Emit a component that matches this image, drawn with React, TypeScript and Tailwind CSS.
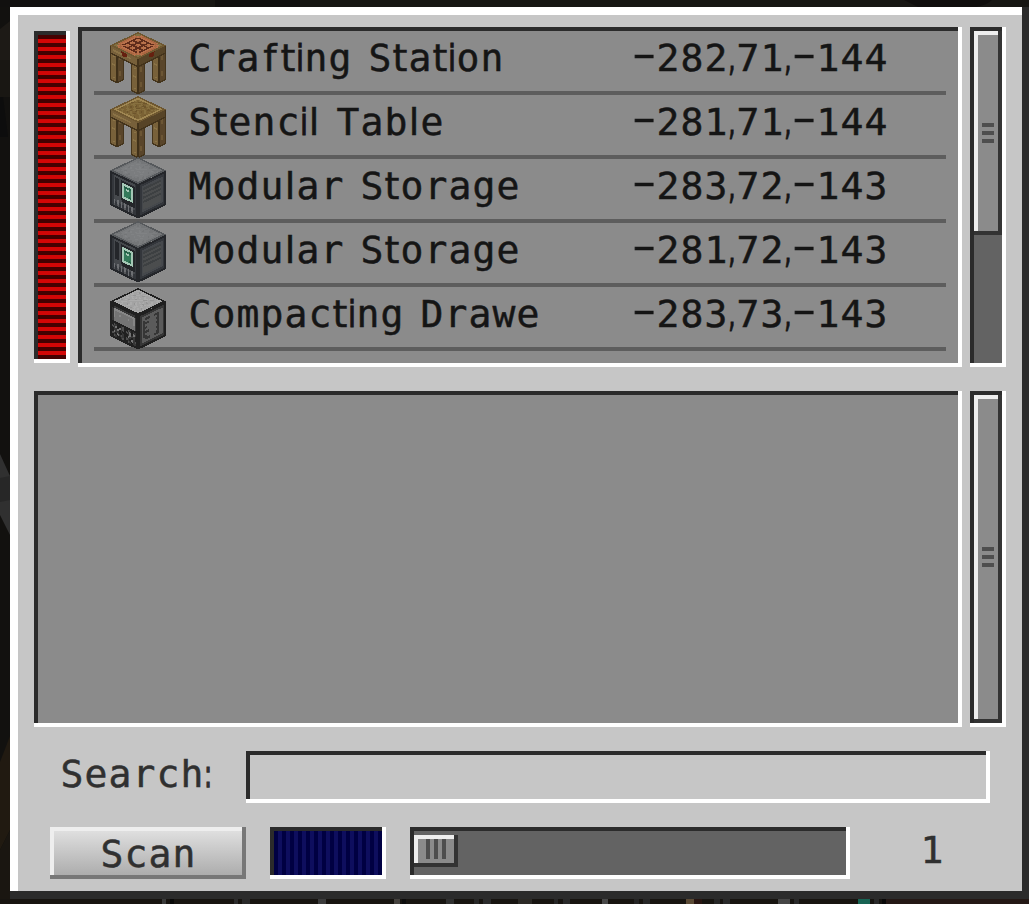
import React from "react";

/* ---------- text ---------- */

type Glyph = { box: string; face?: string };

const MONO = "font-['DejaVu_Sans_Mono',monospace]";
const SANS = "font-['DejaVu_Sans',sans-serif]";

const NARROW: Record<string, Glyph> = {
  i: { box: "w-1 mr-1 scale-x-[.76] [-webkit-text-stroke:1px_currentColor]", face: SANS },
  l: { box: "w-2 mr-1", face: SANS },
  t: { box: "w-3 mr-1", face: SANS },
  f: { box: "w-4 mr-1", face: SANS },
  " ": { box: "w-3 mr-1", face: SANS },
  ",": { box: "w-1 mr-1 scale-x-[.6] [-webkit-text-stroke:1px_currentColor]", face: SANS },
  ":": { box: "w-1 mr-1 scale-x-[.6] [-webkit-text-stroke:1.5px_currentColor]", face: SANS },
  "-": { box: "w-5 mr-1 scale-x-[1.8] -translate-y-1", face: SANS },
};

function Label({ text, className = "" }: { text: string; className?: string }) {
  return (
    <span
      className={`block h-[38px] text-[38px] leading-[38px] whitespace-pre [-webkit-text-stroke:0.5px_currentColor] ${className}`}
    >
      {text.split("").map((ch, i) => {
        const g = NARROW[ch] ?? { box: "w-5 mr-1" };
        return (
          <span key={i} className={`inline-flex h-[38px] justify-center align-top ${g.face ?? MONO} ${g.box}`}>
            {ch}
          </span>
        );
      })}
    </span>
  );
}

/* ---------- bevelled boxes ---------- */

function Inset({ className = "", inner = "", children }: { className?: string; inner?: string; children?: React.ReactNode }) {
  return (
    <div className={`shrink-0 bg-white pr-1 pb-1 ${className}`}>
      <div className="h-full w-full bg-[#2b2b2b] pt-1 pl-1">
        <div className={`h-full w-full ${inner}`}>{children}</div>
      </div>
    </div>
  );
}

function Raised({
  className = "",
  edge = "bg-[#333333]",
  inner = "bg-[#8b8b8b]",
  children,
}: {
  className?: string;
  edge?: string;
  inner?: string;
  children?: React.ReactNode;
}) {
  return (
    <div className={`pr-1 pb-1 ${edge} ${className}`}>
      <div className="h-full w-full bg-[#eeeeee] pt-1 pl-1">
        <div className={`flex h-full w-full ${inner}`}>{children}</div>
      </div>
    </div>
  );
}

function ScrollBar({ height, thumb, grip }: { height: string; thumb: string; grip: string }) {
  return (
    <Inset className={`w-9 ${height}`} inner="bg-[#636363]">
      <Raised className={`w-7 ${thumb}`}>
        <div className={`ml-1 flex flex-col gap-1 ${grip}`}>
          <div className="h-1 w-3 bg-[#4e4e4e]" />
          <div className="h-1 w-3 bg-[#4e4e4e]" />
          <div className="h-1 w-3 bg-[#4e4e4e]" />
        </div>
      </Raised>
    </Inset>
  );
}

/* ---------- block icons ---------- */

type Palette = Record<string, string>;

function Texture({ rows, palette, transform }: { rows: string[]; palette: Palette; transform: string }) {
  return (
    <g transform={transform}>
      {rows.flatMap((row, y) =>
        row.split("").map((c, x) => (
          <rect key={`${x}-${y}`} x={x} y={y} width={1.06} height={1.06} fill={palette[c]} />
        )),
      )}
    </g>
  );
}

const TOP = "matrix(1.75 .84 -1.75 .84 28 0)";
const LEFT = "matrix(1.75 .84 0 2.16 0 13.5)";
const RIGHT = "matrix(1.75 -.84 0 2.16 28 27)";

const STORAGE: Palette = {
  k: "#24262a", d: "#33363b", m: "#45484c", g: "#55575a", l: "#6d6f73",
  t: "#7b7d7f", u: "#747678", v: "#808284", e: "#56595c",
  W: "#a4c7b5", G: "#347a5a", H: "#255f47", r: "#3d4042", s: "#4b4d4e",
};

const storageTop = [
  "eeeeeeeeeeeeeeee", "euuuuuuuuuuuuuue", "euutuututuuttuue", "eututtttttutuute",
  "euttvttuttttvtue", "euttttvttvttttue", "eutvtttvvtttutue", "euttttvvttvtttue",
  "eutuvtttvvttttue", "euttttvttttvttue", "eutvttttvttttute", "euttutttttvtttue",
  "euuttvtuttttutue", "eutuuttututuuute", "euuuuuuuuuuuuuue", "eeeeeeeeeeeeeeee",
];
const storageFront = [
  "kkkkkkkkkkkkkkkk", "kdmmmmmmmmmmmmdk", "kdmkkmkkkkkkkkdk", "kdmkkmkWWWWWWkdk",
  "kdmkkmkWHHGHWkdk", "kdmkkmkWGWWGWkdk", "kdmkkmkWGGGGWkdk", "kdmkkmkWGGGGWkdk",
  "kdmkkmkWGGGHWkdk", "kdmkkmkWWWWWWkdk", "kdmmmmkkkkkkkkdk", "kdmmmmmkkkkkkkdk",
  "kdlmlmlmlmlmlmdk", "kdldldldldldlddk", "kdgdgdldgdldgddk", "kkkkkkkkkkkkkkkk",
];
const storageSide = [
  "kkkkkkkkkkkkkkkk", "kddddddddddddddk", "kdmmmmmmmmmmmmdk", "kdmrrrrrrrrrrmdk",
  "kdmssssssssssmdk", "kdmrrrrrrrrrrmdk", "kdmssssssssssmdk", "kdmrrrrrrrrrrmdk",
  "kdmssssssssssmdk", "kdmrrrrrrrrrrmdk", "kdmssssssssssmdk", "kdmssssssssssmdk",
  "kdmssssssssssmdk", "kdmmmmmmmmmmmmdk", "kddddddddddddddk", "kkkkkkkkkkkkkkkk",
];

const DRAWER: Palette = {
  k: "#202020", d: "#363636", m: "#4e4e4e", g: "#747474", l: "#868686",
  t: "#a3a3a3", u: "#959595", v: "#acacac", s: "#5b5b5b",
};
const drawerTop = [
  "kkkkkkkkkkkkkkkk", "ktvtvttvvttvtvtk", "kvtuvtvtttvttvtk", "kttvttuvttvuttvk",
  "kvttvtttvvttvttk", "ktvuttvttuvttvtk", "kttvtvttvttutvtk", "kvttvtuvttvttvtk",
  "ktvtttvttvtuvttk", "kvttuvttvttvttvk", "kttvttvtuvttvttk", "kvutvttvttvttuvk",
  "kttvttuvttvtvttk", "kvttvttvtutvttvk", "ktvtvtvttvtvtvtk", "kkkkkkkkkkkkkkkk",
];
const drawerFront = [
  "kkkkkkkkkkkkkkkk", "kkddddddddddddkk", "kdlllllllllllldk", "kdlggggggggggldk",
  "kdlgglgggglggldk", "kdlggggggggggldk", "kdggggggggggggdk", "kdggggggggggggdk",
  "kkkkkkkkkkkkkkkk", "kkmdkkdmkkmdkddk", "kmdgkgdmkmdgkgdk", "kkddgkdkkkdgddkk",
  "kkgddkkdkkgdkdkk", "kmdkgdmdkmdkgdmk", "kkmdkkdmkkmdkddk", "kkkkkkkkkkkkkkkk",
];
const drawerSide = [
  "kkkkkkkkkkkkkkkk", "kddddddddddddddk", "kdssssssssssssdk", "kdssdddssdddssdk",
  "kdsdsssssssdssdk", "kdsdddssssddssdk", "kdsdsssssssdssdk", "kdsddsssssddssdk",
  "kdsdsssssssdssdk", "kdsdddssssddssdk", "kdsdsssssssdssdk", "kdsddsssssddssdk",
  "kdssdddssdddssdk", "kdssssssssssssdk", "kddddddddddddddk", "kkkkkkkkkkkkkkkk",
];

const WOOD: Palette = {
  f: "#6e5730", w: "#a08752", b: "#7b6234", n: "#87703f", c: "#6d552c",
  o: "#a96540", p: "#b9714b", x: "#5f2c1b", q: "#817043",
};
const stencilTop = [
  "ffffffffffffffff", "fwwwwwwwwwwwwwwf", "fwbnbbcbnbbnbbwf", "fwnbcnbbnnbcbnwf",
  "fwbbnbnccbnbnbwf", "fwcnbbnbnbbcbbwf", "fwbnncbbbnnbbnwf", "fwbbbnbcnbbnbbwf",
  "fwnbcbnnbbcbnbwf", "fwbnbbbncnbbbcwf", "fwbbnncbbbnnbbwf", "fwcbbnbnbcbbnbwf",
  "fwbnbbcbnnbbbnwf", "fwbbnbbnbbncbbwf", "fwwwwwwwwwwwwwwf", "ffffffffffffffff",
];
const craftingTop = [
  "ffffffffffffffff", "fqqpoooooooopqqf", "fqpoppppppppopqf", "fpopxxxxxxxxpopf",
  "fopxppxppxppxpof", "fopxpoxopxopxpof", "fopxxxxxxxxxxpof", "fopxppxppxppxpof",
  "fopxpoxopxopxpof", "fopxxxxxxxxxxpof", "fopxppxppxppxpof", "fopxpoxopxopxpof",
  "fpopxxxxxxxxpopf", "fqpoppppppppopqf", "fqqpoooooooopqqf", "ffffffffffffffff",
];

function Leg({ x, top, bottom }: { x: number; top: number; bottom: number }) {
  const h = bottom - top;
  return (
    <g transform={`translate(${x} ${top})`}>
      <path d={`M0 0h7v${h}l-7 -3z`} fill="#78613a" />
      <path d={`M7 0h7v${h - 3}l-7 3z`} fill="#59452a" />
      <path d={`M.7 0v${h - 3.4}l6.3 2.9l6.3 -2.9V0`} fill="none" stroke="#45351c" strokeWidth="1.4" />
      <path d={`M7 0v${h}`} stroke="#3f3019" strokeWidth="1.6" />
      <path d={`M3 8l2 1M2 16l3 1M3 ${h - 6}l2 1`} stroke="#8a7346" strokeWidth="1.3" />
      <path d={`M10 7v5M10 ${h - 12}v5`} stroke="#6c5634" strokeWidth="2" />
    </g>
  );
}

function TableIcon({ crafting = false }: { crafting?: boolean }) {
  return (
    <svg width="56" height="62" viewBox="0 0 56 62" shapeRendering="crispEdges">
      <Leg x={0} top={16} bottom={51} />
      <Leg x={42} top={16} bottom={51} />
      <Leg x={21} top={28} bottom={62} />
      <path d="M0 13.5L28 27v8L0 21z" fill="#77603a" />
      <path d="M56 13.5L28 27v8l28 -14z" fill="#574427" />
      <path d="M0 21l28 13.5L56 21M28 27v8M.7 14v7M55.3 14v7" fill="none" stroke="#43331b" strokeWidth="1.4" />
      <path d="M3 18l18 8.7" stroke="#8b7346" strokeWidth="1.6" />
      <Texture rows={crafting ? craftingTop : stencilTop} palette={WOOD} transform={TOP} />
      {crafting && (
        <>
          <path d="M11 19l6 3v3.5l-2 -1v1l-3 -1.500v-2z" fill="#65200f" />
          <path d="M45 19l-6 3v3.5l2 -1v1l3 -1.500v-2z" fill="#65200f" />
        </>
      )}
    </svg>
  );
}

function CubeIcon({ drawer = false }: { drawer?: boolean }) {
  const palette = drawer ? DRAWER : STORAGE;
  return (
    <svg width="56" height="62" viewBox="0 0 56 62" shapeRendering="crispEdges">
      <Texture rows={drawer ? drawerTop : storageTop} palette={palette} transform={TOP} />
      <Texture rows={drawer ? drawerFront : storageFront} palette={palette} transform={LEFT} />
      <Texture rows={drawer ? drawerSide : storageSide} palette={palette} transform={RIGHT} />
    </svg>
  );
}

/* ---------- list ---------- */

const ITEMS = [
  { name: "Crafting Station", pos: "-282,71,-144", icon: <TableIcon crafting />, shift: "mt-px" },
  { name: "Stencil Table", pos: "-281,71,-144", icon: <TableIcon />, shift: "mt-px" },
  { name: "Modular Storage", pos: "-283,72,-143", icon: <CubeIcon />, shift: "-mt-0.5" },
  { name: "Modular Storage", pos: "-281,72,-143", icon: <CubeIcon />, shift: "-mt-0.5" },
  { name: "Compacting Drawe", pos: "-283,73,-143", icon: <CubeIcon drawer />, shift: "mt-px" },
];

function ItemRow({ item }: { item: (typeof ITEMS)[number] }) {
  return (
    <div className="mx-3 h-16">
      <div className="flex h-[60px] items-start pl-4">
        <div className={`relative z-10 h-[62px] w-14 shrink-0 ${item.shift}`}>{item.icon}</div>
        <Label text={item.name} className="ml-6 w-[444px] shrink-0 pt-2 text-[#151515]" />
        <Label text={item.pos} className="pt-2 text-[#151515]" />
      </div>
      <div className="h-1 bg-[#5d5d5d]" />
    </div>
  );
}

/* ---------- backdrop slivers around the window ---------- */

function LeftBackdrop() {
  return (
    <svg className="shrink-0" width="10" height="892" viewBox="0 0 10 892">
      <rect width="10" height="892" fill="#12110f" />
      <path d="M0 22L10 14V53H0z" fill="#1d1a16" />
      <path d="M0 53H10V90H0z" fill="#191713" />
      <path d="M0 90h3l5 40H0z" fill="#0d0d0d" />
      <path d="M0 447L10 469V528L0 508z" fill="#303030" />
      <path d="M0 471L10 469V493L0 495z" fill="#272727" />
      <path d="M10 729L0 755V843L10 823z" fill="#211a11" />
      <path d="M0 843L10 823V892H0z" fill="#1a1611" />
    </svg>
  );
}

const SPECKS: [number, number, string][] = [
  [162, 4, "#3a3a3a"], [170, 4, "#080808"], [234, 4, "#2b2b2b"], [242, 8, "#292929"],
  [318, 8, "#3b3b3b"], [394, 6, "#45423e"], [402, 4, "#0c0c0c"], [446, 8, "#303030"],
  [474, 5, "#272727"], [483, 8, "#2b2b2b"], [518, 14, "#2b2925"], [554, 4, "#262626"],
  [563, 7, "#292929"], [602, 6, "#484848"], [634, 5, "#242424"], [643, 7, "#272727"],
  [686, 8, "#5b4a35"], [694, 8, "#281511"], [714, 6, "#262626"], [723, 7, "#292929"],
  [778, 12, "#454545"], [794, 5, "#292929"], [858, 12, "#176353"], [874, 5, "#292929"],
  [882, 4, "#080808"],
];

export default function App() {
  return (
    <div className="flex h-[904px] w-[1029px] flex-col overflow-hidden bg-[#12110f]">
      <svg className="shrink-0" width="1029" height="7">
        <rect width="1029" height="7" fill="#171613" />
        <rect x="0" width="110" height="7" fill="#11100f" />
        <rect x="215" width="85" height="7" fill="#100f0e" />
        <path d="M904 0h88q-5 5 -16 7h-58z" fill="#0f0d0c" />
      </svg>

      <div className="flex h-[892px] shrink-0">
        <LeftBackdrop />
        <div className="h-[892px] w-[1019px] bg-[#2b2b2b] pr-[7px] pb-2">
          <div className="h-[884px] w-[1012px] bg-white pt-2 pl-2">
            <div className="h-[876px] w-[1004px] bg-[#c6c6c6] pt-3 pl-4">
              <div className="flex h-[340px]">
                <Inset
                  className="mt-1 h-[332px] w-9"
                  inner="bg-[repeating-linear-gradient(to_bottom,#450101_0px,#450101_4px,#d30606_4px,#d30606_8px)]"
                />
                <Inset className="ml-2 h-[340px] w-[884px]" inner="bg-[#8b8b8b]">
                  {ITEMS.map((item, i) => (
                    <ItemRow key={i} item={item} />
                  ))}
                </Inset>
                <div className="w-2 shrink-0" />
                <ScrollBar height="h-[340px]" thumb="h-[204px]" grip="mt-[88px]" />
              </div>

              <div className="mt-6 flex h-[336px] gap-2">
                <Inset className="h-[336px] w-[928px]" inner="bg-[#8b8b8b]" />
                <ScrollBar height="h-[336px]" thumb="h-[328px]" grip="mt-[148px]" />
              </div>

              <div className="mt-6 flex h-[52px] items-start">
                <Label text="Search:" className="ml-7 w-[184px] shrink-0 pt-1 text-[#303030]" />
                <Inset className="h-[52px] w-[744px]" inner="bg-[#c6c6c6]" />
              </div>

              <div className="mt-6 flex h-[52px] items-start pl-4">
                <button className="block h-[52px] w-[196px] shrink-0">
                  <Raised
                    className="h-[52px] w-[196px]"
                    edge="bg-[#777777]"
                    inner="bg-linear-to-b from-[#dfdfdf] to-[#adadad]"
                  >
                    <Label text="Scan" className="ml-12 pt-1 text-[#303030]" />
                  </Raised>
                </button>
                <Inset
                  className="ml-6 h-[52px] w-[116px]"
                  inner="bg-[repeating-linear-gradient(to_right,#000042_0px,#000042_4px,#0e0e5e_4px,#0e0e5e_8px)]"
                />
                <Inset className="ml-6 h-[52px] w-[440px]" inner="bg-[#636363] pt-1">
                  <Raised className="h-8 w-11">
                    <div className="ml-2 flex h-5 gap-1">
                      <div className="w-1 bg-[#4e4e4e]" />
                      <div className="w-1 bg-[#4e4e4e]" />
                      <div className="w-1 bg-[#4e4e4e]" />
                    </div>
                  </Raised>
                </Inset>
                <Label text="1" className="ml-[72px] pt-1 text-[#303030]" />
              </div>
            </div>
          </div>
        </div>
      </div>

      <svg className="shrink-0" width="1029" height="5" shapeRendering="crispEdges">
        <rect width="1029" height="5" fill="#171410" />
        <rect x="886" width="143" height="5" fill="#241815" />
        {SPECKS.map(([x, w, c]) => (
          <rect key={x} x={x} width={w} height="5" fill={c} />
        ))}
      </svg>
    </div>
  );
}
